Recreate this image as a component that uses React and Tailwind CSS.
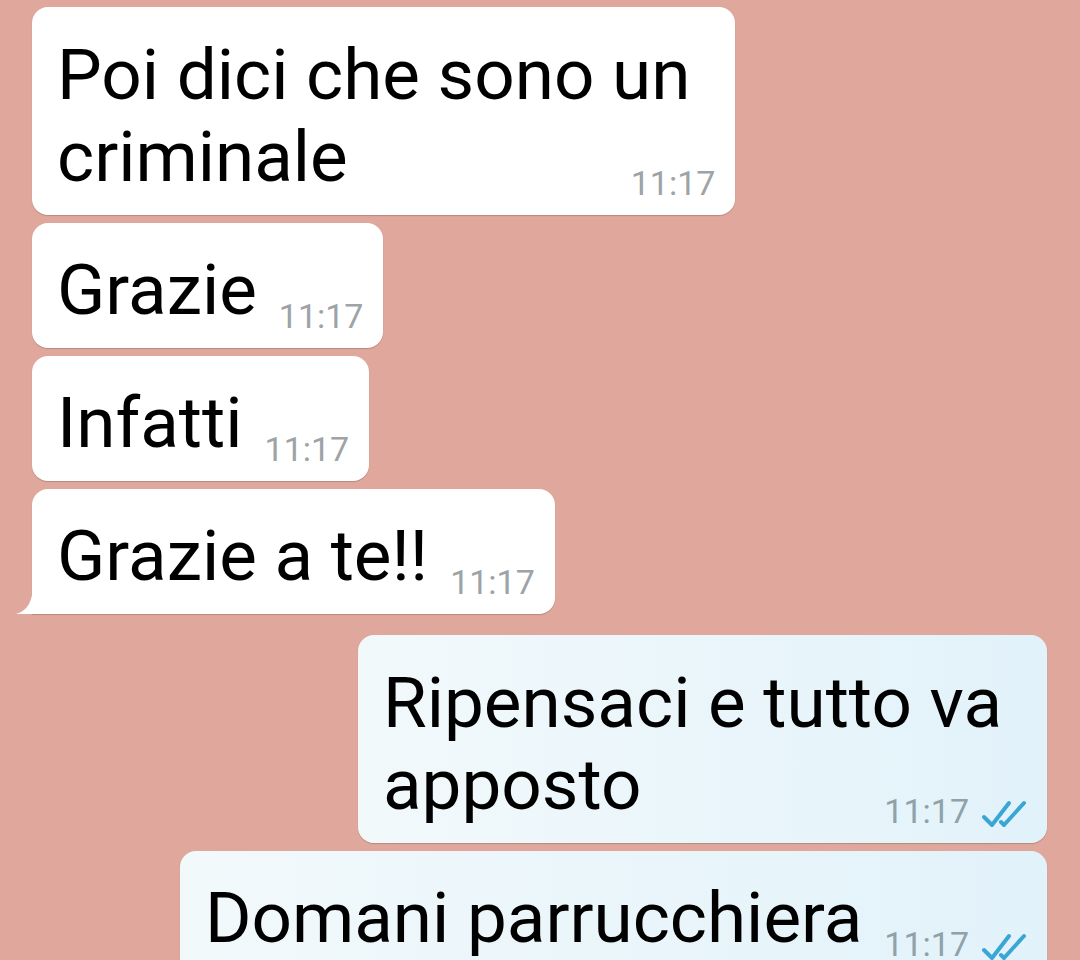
import React from 'react';

const Ticks = () => (
  <svg width="46" height="30" viewBox="0 0 46 30" className="shrink-0 -mb-[3px]">
    <path d="M3 18 L11 26 L28 4" fill="none" stroke="#3aa6d4" strokeWidth="4" strokeLinecap="round" strokeLinejoin="round" />
    <path d="M20 23 L23 26 L43 4" fill="none" stroke="#3aa6d4" strokeWidth="4" strokeLinecap="round" strokeLinejoin="round" />
  </svg>
);

const Time = ({ out }) => (
  <span className={`text-[34px] leading-[40px] -mb-[5px] shrink-0 ${out ? 'text-[#8fa1a9]' : 'text-[#9da3a6]'}`}>
    11:17
  </span>
);

const Meta = ({ out }) => (
  <div className="flex items-end gap-[12px] shrink-0">
    <Time out={out} />
    {out && <Ticks />}
  </div>
);

// one or two lines, the time sits on the last one
const Bubble = ({ lines, out, tail }) => {
  const last = lines[lines.length - 1];
  return (
    <div
      className={`relative rounded-[16px] pl-[25px] pr-[20px] pt-[26px] pb-[17px] shadow-[0_1px_1px_rgba(0,0,0,0.18)] ${
        out ? 'bg-linear-to-r from-[#f2f9fb] to-[#e2f2fa]' : 'bg-white'
      } ${tail ? 'rounded-bl-none' : ''}`}
    >
      {lines.length > 1 && (
        <div className="text-[71px] leading-[83px] pr-[25px] whitespace-nowrap">{lines[0]}</div>
      )}
      <div className={`flex items-end ${lines.length > 1 ? 'justify-between' : 'gap-[22px]'}`}>
        <span className="text-[71px] leading-[82px] whitespace-nowrap">{last}</span>
        <Meta out={out} />
      </div>
      {tail && (
        <svg width="17" height="30" viewBox="0 0 17 30" className="absolute left-[-16px] bottom-0">
          <path d="M17 0 C17 16 12 27 0 30 L17 30 Z" fill="#ffffff" />
        </svg>
      )}
    </div>
  );
};

const App = () => {
  return (
    <div className="h-[960px] overflow-hidden bg-[#e0a79c] font-['Roboto',sans-serif] text-black">
      <div className="flex flex-col px-[32px] pt-[7px]">
        <div className="flex flex-col items-start gap-[8px]">
          <Bubble lines={['Poi dici che sono un', 'criminale']} />
          <Bubble lines={['Grazie']} />
          <Bubble lines={['Infatti']} />
          <Bubble lines={['Grazie a te!!']} tail />
        </div>
        <div className="flex flex-col items-end gap-[8px] mt-[21px] pr-[1px]">
          <Bubble lines={['Ripensaci e tutto va', 'apposto']} out />
          <Bubble lines={['Domani parrucchiera']} out />
        </div>
      </div>
    </div>
  );
};

export default App;
